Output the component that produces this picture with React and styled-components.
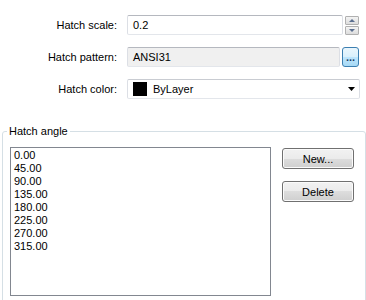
import React from "react";
import styled, { createGlobalStyle } from "styled-components";

const angles = ["0.00", "45.00", "90.00", "135.00", "180.00", "225.00", "270.00", "315.00"];

const App = () => {
  return (
    <Panel>
      <GlobalStyle />
      <FormGrid>
        <Label>Hatch scale:</Label>
        <FieldRow $inset={7}>
          <TextBox>0.2</TextBox>
          <Spinner>
            <SpinButton aria-label="up">
              <SpinArrow $up />
            </SpinButton>
            <SpinButton aria-label="down">
              <SpinArrow />
            </SpinButton>
          </Spinner>
        </FieldRow>

        <Label>Hatch pattern:</Label>
        <FieldRow $inset={7}>
          <TextBox $readOnly>ANSI31</TextBox>
          <BrowseButton>...</BrowseButton>
        </FieldRow>

        <Label>Hatch color:</Label>
        <FieldRow $inset={6}>
          <Combo>
            <Swatch />
            <ComboText>ByLayer</ComboText>
            <svg width="7" height="4" viewBox="0 0 7 4">
              <polygon points="0,0 7,0 3.5,4" fill="#000" />
            </svg>
          </Combo>
        </FieldRow>
      </FormGrid>

      <Group>
        <Legend>Hatch angle</Legend>
        <GroupBody>
          <ListBox>
            {angles.map((a) => (
              <ListItem key={a}>{a}</ListItem>
            ))}
          </ListBox>
          <ButtonColumn>
            <PushButton>New...</PushButton>
            <PushButton>Delete</PushButton>
          </ButtonColumn>
        </GroupBody>
      </Group>
    </Panel>
  );
};

const GlobalStyle = createGlobalStyle`
  body {
    margin: 0;
    background: #ffffff;
    font-family: "Liberation Sans", Arial, sans-serif;
    font-size: 11px;
    color: #000;
  }
`;

const Panel = styled.div`
  width: 366px;
  height: 300px;
  overflow: hidden;
  padding-top: 15px;
  box-sizing: border-box;
`;

const FormGrid = styled.div`
  display: grid;
  grid-template-columns: 117px 1fr;
  grid-auto-rows: 20px;
  column-gap: 10px;
  row-gap: 12px;
`;

const Label = styled.div`
  align-self: center;
  text-align: right;
  white-space: nowrap;
`;

const FieldRow = styled.div`
  display: flex;
  gap: 2px;
  padding-right: ${(p) => p.$inset}px;
`;

const TextBox = styled.div`
  flex: 1;
  box-sizing: border-box;
  height: 20px;
  display: flex;
  align-items: center;
  padding: 0 5px;
  border: 1px solid;
  border-color: #b5b8bf #dcdfe5 #e3e6eb #dcdfe5;
  border-radius: 2px;
  background: ${(p) => (p.$readOnly ? "#f0f0f0" : "#ffffff")};
`;

const Spinner = styled.div`
  width: 14px;
  margin-top: 1px;
  display: flex;
  flex-direction: column;
  gap: 1px;
`;

const SpinButton = styled.button`
  box-sizing: border-box;
  height: 9px;
  padding: 0;
  border: 1px solid #b0b0b0;
  border-radius: 1px;
  background: linear-gradient(#f4f4f4, #dcdcdc);
  display: flex;
  align-items: center;
  justify-content: center;
`;

const SpinArrow = styled.span`
  width: 0;
  height: 0;
  border-left: 3px solid transparent;
  border-right: 3px solid transparent;
  ${(p) =>
    p.$up ? "border-bottom: 3px solid #5b6f8f;" : "border-top: 3px solid #5b6f8f;"}
`;

const BrowseButton = styled.button`
  box-sizing: border-box;
  width: 17px;
  height: 20px;
  padding: 0;
  border: 1px solid #3c7fb1;
  border-radius: 3px;
  background: linear-gradient(#eaf6fd 0%, #d9f0fc 50%, #bee6fd 50%, #a7d9f5 100%);
  font-family: inherit;
  font-size: 11px;
  font-weight: bold;
  color: #1c3c66;
  line-height: 18px;
  text-align: center;
`;

const Combo = styled.div`
  flex: 1;
  box-sizing: border-box;
  height: 20px;
  display: flex;
  align-items: center;
  gap: 6px;
  padding: 0 4px 0 5px;
  border: 1px solid;
  border-color: #c9ccd2 #dcdfe5 #e3e6eb #dcdfe5;
  border-radius: 2px;
  background: #ffffff;
`;

const Swatch = styled.span`
  width: 14px;
  height: 14px;
  background: #000;
`;

const ComboText = styled.span`
  flex: 1;
`;

const Group = styled.fieldset`
  margin: 26px 0 0 2px;
  padding: 9px 0 12px 7px;
  min-width: 0;
  border: 1px solid #d5dfe5;
  border-radius: 3px;
`;

const Legend = styled.legend`
  margin-left: -3px;
  padding: 0 2px;
  line-height: 13px;
`;

const GroupBody = styled.div`
  display: flex;
  gap: 11px;
`;

const ListBox = styled.div`
  box-sizing: border-box;
  width: 261px;
  height: 149px;
  padding: 1px 3px;
  border: 1px solid #828790;
  background: #fff;
`;

const ListItem = styled.div`
  line-height: 13px;
`;

const ButtonColumn = styled.div`
  display: flex;
  flex-direction: column;
  gap: 12px;
  padding-top: 1px;
`;

const PushButton = styled.button`
  box-sizing: border-box;
  width: 72px;
  height: 21px;
  padding: 0;
  border: 1px solid #707070;
  border-radius: 3px;
  background: linear-gradient(#f2f2f2 0%, #ebebeb 50%, #dddddd 50%, #cfcfcf 100%);
  box-shadow: inset 0 0 0 1px #fbfbfb;
  font-family: inherit;
  font-size: 11px;
  color: #000;
`;

export default App;
